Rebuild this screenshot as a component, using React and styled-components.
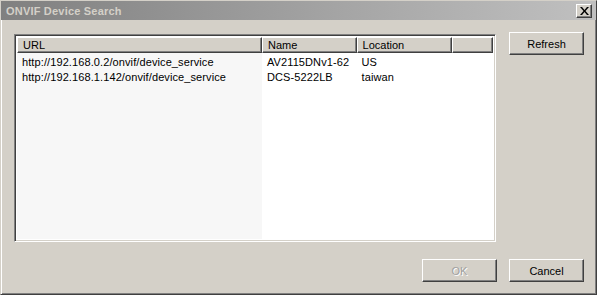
import React from 'react'
import styled, { createGlobalStyle } from 'styled-components'

const rows = [
  { url: 'http://192.168.0.2/onvif/device_service', name: 'AV2115DNv1-62', location: 'US' },
  { url: 'http://192.168.1.142/onvif/device_service', name: 'DCS-5222LB', location: 'taiwan' },
]

const App = () => {
  return (
    <>
      <Global />
      <Window>
        <TitleBar>
          <Title>ONVIF Device Search</Title>
          <CloseBox>
            <svg width="9" height="8" viewBox="0 0 9 8">
              <path d="M0 0h2l2.5 3 2.5-3h2L5.5 4 9 8H7L4.5 5 2 8H0l3.5-4z" fill="#000" />
            </svg>
          </CloseBox>
        </TitleBar>
        <Body>
          <Top>
            <List>
              <Header>
                <HeadCell w={246}>URL</HeadCell>
                <HeadCell w={95}>Name</HeadCell>
                <HeadCell w={96}>Location</HeadCell>
                <HeadCell w={41} />
              </Header>
              <Columns>
                <Col w={246} shade>
                  {rows.map(r => <Cell key={r.url}>{r.url}</Cell>)}
                </Col>
                <Col w={95}>
                  {rows.map(r => <Cell key={r.name}>{r.name}</Cell>)}
                </Col>
                <Col w={96}>
                  {rows.map(r => <Cell key={r.location}>{r.location}</Cell>)}
                </Col>
                <Col w={41} />
              </Columns>
            </List>
            <Button>Refresh</Button>
          </Top>
          <Footer>
            <Button disabled>OK</Button>
            <Button>Cancel</Button>
          </Footer>
        </Body>
      </Window>
    </>
  )
}

export default App

const Global = createGlobalStyle`
  body {
    margin: 0;
    background: #d4d0c8;
    font-family: Tahoma, "Liberation Sans", Arial, sans-serif;
  }
`

const Window = styled.div`
  width: 597px;
  height: 295px;
  box-sizing: border-box;
  background: #d4d0c8;
  border-top: 1px solid #d4d0c8;
  border-left: 1px solid #d4d0c8;
  border-right: 1px solid #404040;
  border-bottom: 1px solid #404040;
  box-shadow: inset 1px 1px #fff, inset -1px -1px #808080;
  display: flex;
  flex-direction: column;
`

const TitleBar = styled.div`
  height: 19px;
  background: linear-gradient(to right, #808080, #c0c0c0);
  display: flex;
  align-items: center;
  justify-content: space-between;
  padding: 0 4px 0 5px;
`

const Title = styled.span`
  color: #d4d0c8;
  font-weight: bold;
  font-size: 11px;
  letter-spacing: 0.2px;
`

const CloseBox = styled.div`
  width: 16px;
  height: 14px;
  box-sizing: border-box;
  background: #d4d0c8;
  border-top: 1px solid #fff;
  border-left: 1px solid #fff;
  border-right: 1px solid #404040;
  border-bottom: 1px solid #404040;
  box-shadow: inset -1px -1px #808080;
  display: flex;
  align-items: center;
  justify-content: center;
`

const Body = styled.div`
  flex: 1;
  display: flex;
  flex-direction: column;
  justify-content: space-between;
  padding: 14px 12px 12px 13px;
`

const Top = styled.div`
  display: flex;
  justify-content: space-between;
  align-items: flex-start;
`

const List = styled.div`
  width: 482px;
  height: 208px;
  box-sizing: border-box;
  background: #fff;
  border-top: 1px solid #808080;
  border-left: 1px solid #808080;
  border-right: 1px solid #fff;
  border-bottom: 1px solid #fff;
  box-shadow: inset 1px 1px #404040, inset -1px -1px #d4d0c8;
  padding: 2px;
  display: flex;
  flex-direction: column;
  font-size: 11px;
  color: #000;
`

const Header = styled.div`
  display: flex;
  height: 16px;
`

const HeadCell = styled.div`
  width: ${p => p.w}px;
  box-sizing: border-box;
  background: #d4d0c8;
  border-top: 1px solid #fff;
  border-left: 1px solid #fff;
  border-right: 1px solid #404040;
  border-bottom: 1px solid #404040;
  box-shadow: inset -1px -1px #808080;
  padding: 1px 0 0 5px;
  line-height: 13px;
`

const Columns = styled.div`
  flex: 1;
  display: flex;
`

const Col = styled.div`
  width: ${p => p.w}px;
  background: ${p => (p.shade ? '#f7f7f7' : '#fff')};
  padding-top: 2px;
`

const Cell = styled.div`
  height: 15px;
  line-height: 15px;
  padding-left: 5px;
  letter-spacing: 0.1px;
  white-space: nowrap;
  overflow: hidden;
`

const Button = styled.button`
  width: 75px;
  height: 23px;
  box-sizing: border-box;
  background: #d4d0c8;
  border: none;
  border-top: 1px solid #fff;
  border-left: 1px solid #fff;
  border-right: 1px solid #404040;
  border-bottom: 1px solid #404040;
  box-shadow: inset -1px -1px #808080;
  font-family: Tahoma, "Liberation Sans", Arial, sans-serif;
  font-size: 11px;
  color: #000;
  padding: 0;
  margin-top: -2px;

  &:disabled {
    color: #a0a0a0;
    text-shadow: 1px 1px #fff;
  }
`

const Footer = styled.div`
  display: flex;
  justify-content: flex-end;
  gap: 12px;
`
